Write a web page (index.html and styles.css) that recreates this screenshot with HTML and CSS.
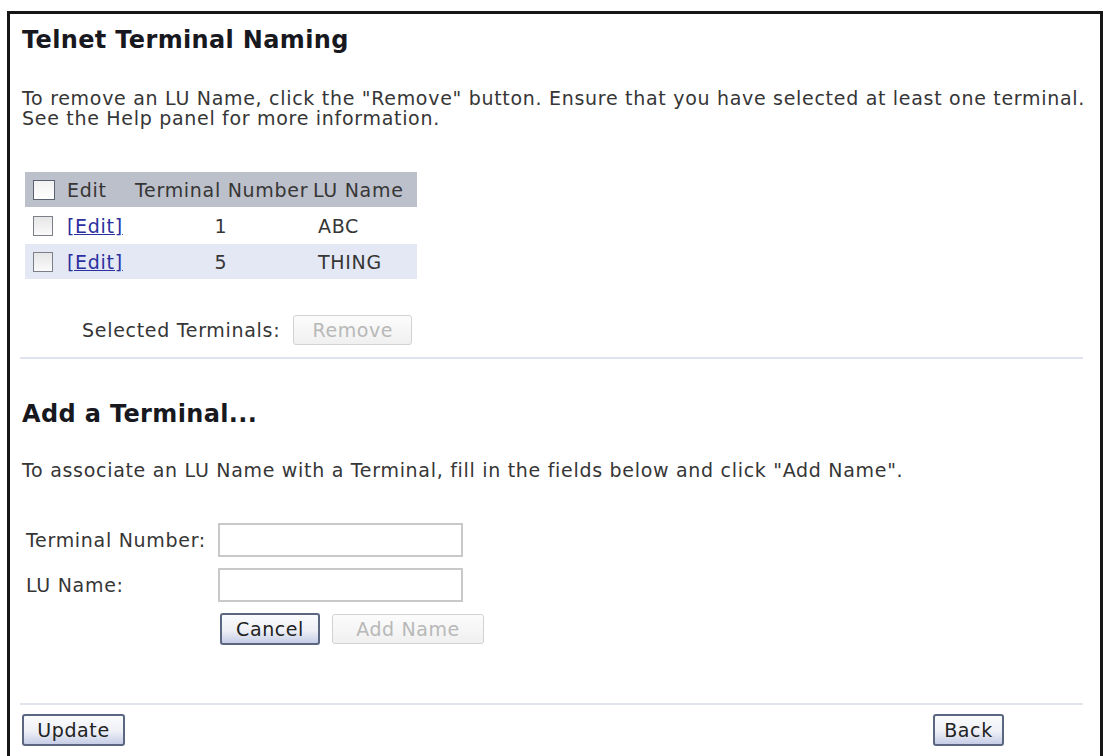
FILE: index.html
```html
<!DOCTYPE html>
<html>
<head>
<meta charset="utf-8">
<link rel="stylesheet" href="styles.css">
</head>
<body>
<div class="frame">
  <h1 class="title">Telnet Terminal Naming</h1>
  <p class="intro">To remove an LU Name, click the "Remove" button. Ensure that you have selected at least one terminal.<br>See the Help panel for more information.</p>

  <table class="grid">
    <thead>
      <tr>
        <th class="c-check"><span class="box"></span></th>
        <th class="c-edit">Edit</th>
        <th class="c-num">Terminal Number</th>
        <th class="c-name">LU Name</th>
      </tr>
    </thead>
    <tbody>
      <tr class="r1">
        <td class="c-check"><span class="box"></span></td>
        <td class="c-edit"><a href="#" class="link">[Edit]</a></td>
        <td class="c-num">1</td>
        <td class="c-name">ABC</td>
      </tr>
      <tr class="alt">
        <td class="c-check"><span class="box"></span></td>
        <td class="c-edit"><a href="#" class="link">[Edit]</a></td>
        <td class="c-num">5</td>
        <td class="c-name">THING</td>
      </tr>
    </tbody>
  </table>

  <div class="selected">
    <span class="selected-label">Selected Terminals:</span>
    <button class="btn btn-disabled btn-remove">Remove</button>
  </div>

  <div class="sep"></div>

  <h2 class="subtitle">Add a Terminal...</h2>
  <p class="intro2">To associate an LU Name with a Terminal, fill in the fields below and click "Add Name".</p>

  <div class="form">
    <label class="flabel">Terminal Number:</label>
    <input class="field" type="text">
    <label class="flabel">LU Name:</label>
    <input class="field" type="text">
    <div></div>
    <div class="actions">
      <button class="btn btn-cancel">Cancel</button>
      <button class="btn btn-disabled btn-add">Add Name</button>
    </div>
  </div>

  <div class="sep sep-bottom"></div>

  <div class="footer">
    <button class="btn btn-update">Update</button>
    <button class="btn btn-back">Back</button>
  </div>
</div>
</body>
</html>
```

FILE: styles.css
```css
html, body {
  margin: 0;
  padding: 0;
  background: #ffffff;
}

body {
  font-family: "DejaVu Sans", Verdana, sans-serif;
  color: #363636;
  font-size: 19px;
  letter-spacing: 0.7px;
}

.frame {
  margin: 11px 1px 0 7px;
  height: 745px;
  box-sizing: border-box;
  border: 3px solid #161616;
  border-bottom: none;
  padding: 12px 12px 0 12px;
}

.title {
  margin: 0;
  font-size: 24px;
  font-weight: bold;
  color: #18181f;
  line-height: 28px;
  letter-spacing: 0.35px;
}

.intro {
  margin: 34px 0 0 0;
  line-height: 20px;
}

.grid {
  margin: 44px 0 0 3px;
  border-collapse: collapse;
  width: 392px;
  table-layout: fixed;
}

.grid th, .grid td {
  padding: 0;
  font-weight: normal;
  text-align: left;
  white-space: nowrap;
}

.grid thead tr {
  background: #bcc0cb;
  height: 35px;
}

.grid tr.r1 {
  height: 37px;
}

.grid tr.alt {
  background: #e3e8f4;
  height: 35px;
}

.c-check {
  width: 35px;
}

.c-check .box {
  display: block;
  width: 18px;
  height: 18px;
  margin-left: 8px;
  border: 1px solid #7b7f88;
  background: linear-gradient(#e6e6e6, #fafafa);
}

.grid thead .box {
  width: 20px;
  height: 18px;
  border-color: #5a6172;
  background: linear-gradient(#f2f2f2, #ffffff);
}

.grid .c-edit {
  width: 65px;
  padding-left: 7px;
}

.grid .c-num {
  width: 175px;
  padding-left: 3px;
}

.grid td.c-num {
  text-align: center;
  padding-left: 0;
  padding-right: 0;
}

.grid .c-name {
  padding-left: 3px;
}

.grid td.c-name {
  padding-left: 8px;
}

.link {
  color: #2b30a0;
  text-decoration: underline;
}

.selected {
  margin: 36px 0 0 60px;
  display: flex;
  align-items: center;
  gap: 13px;
}

.btn {
  font-family: "DejaVu Sans", Verdana, sans-serif;
  font-size: 19px;
  letter-spacing: 0.6px;
  border-radius: 3px;
  padding: 0;
  cursor: pointer;
}

.btn-disabled {
  color: #b8b8b8;
  border: 1px solid #d2d2d2;
  background: linear-gradient(#fcfcfc, #f0f0f0);
}

.btn-remove {
  width: 119px;
  height: 30px;
}

.btn-cancel, .btn-update, .btn-back {
  color: #222222;
  border: 2px solid #5b6680;
  background: linear-gradient(#fafbfd 0%, #eef0f6 55%, #c6cde6 100%);
}

.sep {
  height: 2px;
  background: #dfe4ef;
  margin: 12px 5px 0 -2px;
}

.subtitle {
  margin: 41px 0 0 0;
  font-size: 24px;
  font-weight: bold;
  color: #18181f;
  line-height: 28px;
  letter-spacing: 0.35px;
}

.intro2 {
  margin: 32px 0 0 0;
  line-height: 20px;
}

.form {
  margin: 43px 0 0 4px;
  display: grid;
  grid-template-columns: 192px auto;
  row-gap: 11px;
  align-items: center;
  justify-content: start;
}

.field {
  width: 245px;
  height: 34px;
  box-sizing: border-box;
  border: 2px solid #c9c9c9;
  background: #ffffff;
  margin: 0;
}

.actions {
  display: flex;
  align-items: center;
  gap: 12px;
  padding-left: 2px;
}

.btn-cancel {
  width: 100px;
  height: 32px;
}

.btn-add {
  width: 152px;
  height: 30px;
}

.sep-bottom {
  margin-top: 58px;
}

.footer {
  display: flex;
  justify-content: space-between;
  margin-top: 9px;
  padding-right: 84px;
}

.btn-update {
  width: 103px;
  height: 32px;
}

.btn-back {
  width: 71px;
  height: 32px;
}
```
